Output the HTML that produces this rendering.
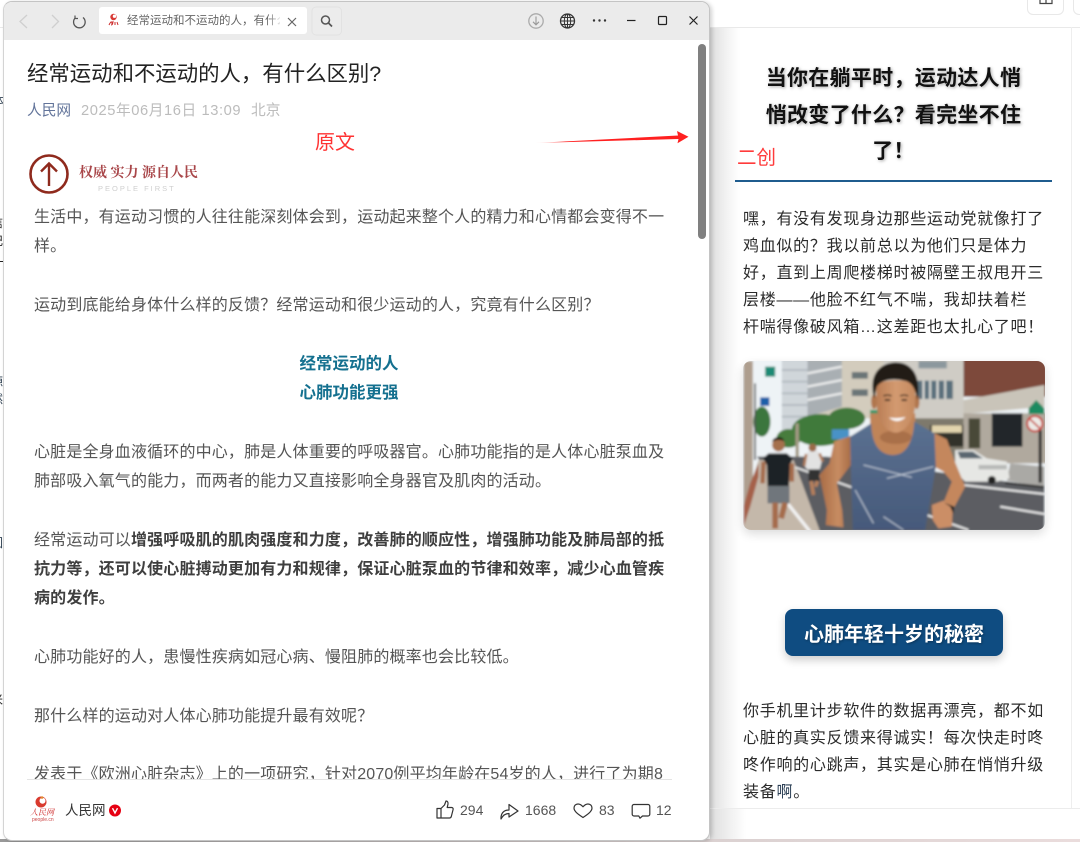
<!DOCTYPE html>
<html lang="zh"><head><meta charset="utf-8"><title>经常运动和不运动的人，有什么区别?</title>
<style>
*{box-sizing:border-box}
html,body{margin:0;padding:0;width:1080px;height:842px;overflow:hidden;background:#fff;font-family:"Liberation Sans","Noto Sans CJK SC",sans-serif}
.a{position:absolute;white-space:nowrap}
.l{position:absolute;left:34px;white-space:nowrap;font-size:16px;line-height:24px;letter-spacing:.16px;color:#555}
.l b{color:#3f3f3f;font-weight:700}
.c{position:absolute;left:3px;width:692px;text-align:center;font-size:16.500px;line-height:24px;font-weight:700;color:#14708f}
.r{position:absolute;left:743px;white-space:nowrap;font-size:16px;line-height:24px;letter-spacing:.72px;color:#2b2b2b}
.t{position:absolute;left:735px;width:317px;text-align:center;font-size:21px;line-height:28px;font-weight:700;color:#111;letter-spacing:.3px;text-shadow:1px 1px 3px rgba(0,0,0,.35)}
</style></head><body>
<div class="a" style="left:710px;top:0;width:370px;height:842px;background:#fff"></div>
<div class="a" style="left:0;top:27px;width:1080px;height:1px;background:#e9e9e9"></div>
<div class="a" style="left:1071px;top:27px;width:1px;height:781px;background:#eee"></div>
<div class="a" style="left:710px;top:808px;width:370px;height:1px;background:#ececec"></div>
<div class="a" style="left:1027px;top:-8px;width:37px;height:23px;background:#fff;border:1px solid #e8e8e8;border-radius:6px"></div>
<div class="a" style="left:1073px;top:-8px;width:30px;height:23px;background:#fff;border:1px solid #e8e8e8;border-radius:6px"></div>
<svg class="a" style="left:1039px;top:0" width="14" height="5"><path d="M1 0V3.500H13V0M7 0V3.500" fill="none" stroke="#444" stroke-width="1.200"/></svg>
<div class="a" style="left:710px;top:28px;width:30px;height:780px;background:linear-gradient(90deg,#dedede,#f4f4f4 60%,#fff)"></div>
<div class="a" style="left:710px;top:809px;width:36px;height:31px;background:linear-gradient(90deg,#dedede,#fff)"></div>
<div class="a" style="left:0;top:839px;width:1080px;height:3px;background:linear-gradient(90deg,#999,#d8cfcf 60%,#eadcdc)"></div>
<div class="a" style="left:-8px;top:92px;font-size:12px;color:#345">体</div>
<div class="a" style="left:-9px;top:214px;font-size:12px;line-height:18px;color:#222;white-space:normal;width:12px">信<br>记</div>
<div class="a" style="left:0;top:261px;width:3px;height:1px;background:#222"></div>
<div class="a" style="left:-9px;top:374px;font-size:12px;line-height:17px;color:#345;white-space:normal;width:12px">源<br>然</div>
<div class="a" style="left:-9px;top:534px;font-size:12px;color:#345">回</div>
<div class="a" style="left:-9px;top:691px;font-size:12px;color:#222">米</div>
<div class="a" style="left:3px;top:1px;width:707px;height:840px;background:#fff;border-radius:9px;border:1px solid #c4c4c4;border-left-color:#d4d4d4;overflow:hidden;box-shadow:2px 1px 4px rgba(0,0,0,.18)"></div>
<div class="a" style="left:4px;top:2px;width:705px;height:38px;background:#ebebeb;border-radius:8px 8px 0 0"></div>
<svg class="a" style="left:0;top:0" width="720" height="40" fill="none">
<path d="M27 15l-7 6.500 7 6.500M52 15l6.500 6.500-6.500 6.500" stroke="#cfcfcf" stroke-width="1.300"/>
<path d="M83 17.500a5.800 5.800 0 1 1-7.500 .2" stroke="#555" stroke-width="1.300"/><path d="M75 15.500v3h3" stroke="#555" stroke-width="1.200"/>
<rect x="312" y="7" width="29.500" height="28" rx="4" fill="#ececec" stroke="#e2e2e2"/>
<circle cx="325.500" cy="20" r="4" stroke="#555" stroke-width="1.500"/><path d="M328.500 23l3.500 3.500" stroke="#555" stroke-width="1.700"/>
<circle cx="536" cy="21" r="7.200" stroke="#ababab" stroke-width="1.300"/><path d="M536 16.500v8M533 21.800l3 3 3-3" stroke="#999" stroke-width="1.100"/>
<circle cx="567.500" cy="21" r="7" stroke="#333" stroke-width="1.300"/><ellipse cx="567.500" cy="21" rx="3.200" ry="7" stroke="#333"/><path d="M560.500 21h14M561.500 17.500h12M561.500 24.500h12M567.500 14v14" stroke="#333"/>
<circle cx="594" cy="20.500" r="1.200" fill="#333"/><circle cx="599.500" cy="20.500" r="1.200" fill="#333"/><circle cx="605" cy="20.500" r="1.200" fill="#333"/>
<path d="M627 20.500h8.500" stroke="#222" stroke-width="1.200"/>
<rect x="658.500" y="16.500" width="8" height="8" rx="1" stroke="#222" stroke-width="1.200"/>
<path d="M689.500 16.500l8 8M697.500 16.500l-8 8" stroke="#222" stroke-width="1.200"/>
</svg>
<div class="a" style="left:99px;top:7px;width:208px;height:27px;background:#fff;border-radius:3px"></div>
<svg class="a" style="left:107px;top:13px" width="14" height="15"><circle cx="6.500" cy="4" r="3.200" fill="#d83a35"/><circle cx="7.500" cy="3.200" r="1.700" fill="#fff"/><path d="M2 12c2-4 3-4 3-1M6 8c0 3-1 4-2 4M8 9v3M10 9l1 3" stroke="#cc2a2a" fill="none"/></svg>
<div class="a" style="left:127px;top:14px;width:153px;overflow:hidden;font-size:11.500px;line-height:15px;color:#666">经常运动和不运动的人，有什么区别?</div>
<div class="a" style="left:268px;top:14px;width:14px;height:15px;background:linear-gradient(90deg,rgba(255,255,255,0),#fff)"></div>
<svg class="a" style="left:287px;top:17px" width="10" height="10"><path d="M1 1l8 8M9 1l-8 8" stroke="#666" stroke-width="1.200"/></svg>
<div class="a" style="left:698px;top:44px;width:8px;height:195px;background:#808080;border-radius:4px"></div>

<div class="a" style="left:27px;top:58px;font-size:21.400px;line-height:32px;color:#222">经常运动和不运动的人，有什么区别?</div>
<div class="a" style="left:27px;top:101px;font-size:14.700px;line-height:20px;color:#62749a">人民网</div>
<div class="a" style="left:81px;top:101px;font-size:14.700px;line-height:20px;color:#bcbcbc;letter-spacing:.58px">2025年06月16日 13:09</div>
<div class="a" style="left:251px;top:101px;font-size:14.700px;line-height:20px;color:#bcbcbc">北京</div>
<div class="a" style="left:315px;top:129px;font-size:20px;line-height:29px;color:#f33">原文</div>
<svg class="a" style="left:530px;top:125px" width="165" height="25"><defs><linearGradient id="g" x1="0" x2="1"><stop offset="0" stop-color="#ff2020" stop-opacity="0"/><stop offset=".2" stop-color="#ff2020"/></linearGradient></defs><path d="M5 18 L148 10.500 L147 6 L158.500 11.700 L147.500 18.300 L148.500 14 Z" fill="url(#g)"/></svg>

<svg class="a" style="left:29px;top:154px" width="42" height="42" fill="none"><circle cx="20" cy="20" r="18.500" stroke="#8f2a1d" stroke-width="2.600"/><path d="M20 32V10M12 17.500l8-8 8 8" stroke="#8f2a1d" stroke-width="2.400"/></svg>
<div class="a" style="left:79px;top:165px;font-family:'Liberation Serif','Noto Serif CJK SC',serif;font-weight:700;font-size:14px;line-height:18px;color:#a9474a">权威 实力 源自人民</div>
<div class="a" style="left:98px;top:184px;font-size:7.500px;line-height:10px;color:#cfcfcf;letter-spacing:2px">PEOPLE FIRST</div>

<div class="l" style="top:206px">生活中，有运动习惯的人往往能深刻体会到，运动起来整个人的精力和心情都会变得不一</div>
<div class="l" style="top:235px">样。</div>
<div class="l" style="top:294px">运动到底能给身体什么样的反馈？经常运动和很少运动的人，究竟有什么区别？</div>
<div class="c" style="top:352px">经常运动的人</div>
<div class="c" style="top:381px">心肺功能更强</div>
<div class="l" style="top:441px">心脏是全身血液循环的中心，肺是人体重要的呼吸器官。心肺功能指的是人体心脏泵血及</div>
<div class="l" style="top:470px">肺部吸入氧气的能力，而两者的能力又直接影响全身器官及肌肉的活动。</div>
<div class="l" style="top:529px">经常运动可以<b>增强呼吸肌的肌肉强度和力度，改善肺的顺应性，增强肺功能及肺局部的抵</b></div>
<div class="l" style="top:558px"><b>抗力等，还可以使心脏搏动更加有力和规律，保证心脏泵血的节律和效率，减少心血管疾</b></div>
<div class="l" style="top:587px"><b>病的发作。</b></div>
<div class="l" style="top:646px">心肺功能好的人，患慢性疾病如冠心病、慢阻肺的概率也会比较低。</div>
<div class="l" style="top:705px">那什么样的运动对人体心肺功能提升最有效呢？</div>
<div class="l" style="top:763px">发表于《欧洲心脏杂志》上的一项研究，针对2070例平均年龄在54岁的人，进行了为期8</div>
<div class="a" style="left:27px;top:779px;width:645px;height:60px;background:#fff;border-top:1px solid #e4e4e4"></div>

<svg class="a" style="left:30px;top:796px" width="24" height="12"><circle cx="11" cy="6" r="5.500" fill="#d93a2e"/><circle cx="12.500" cy="4.800" r="3" fill="#fff"/><circle cx="12" cy="1.500" r="1.300" fill="#e08a2e"/></svg>
<div class="a" style="left:30px;top:807px;font-family:'Liberation Serif','Noto Serif CJK SC',serif;font-style:italic;font-size:8px;line-height:11px;color:#cc2222">人民网</div>
<div class="a" style="left:32px;top:817px;font-size:5px;line-height:6px;color:#c44">people.cn</div>
<div class="a" style="left:65px;top:801px;font-size:13.500px;line-height:19px;color:#333">人民网</div>
<svg class="a" style="left:109px;top:804px" width="13" height="13"><circle cx="6" cy="6.500" r="6" fill="#e60012"/><path d="M3.500 4.200L6 9l2.500-4.800" fill="none" stroke="#fff" stroke-width="1.400"/></svg>

<svg class="a" style="left:430px;top:796px" width="260" height="28" fill="none" stroke="#333" stroke-width="1.200" stroke-linejoin="round">
<path d="M11 12.500v9.500H7V12.500ZM11 12.500l3.500-3.500 1.500-4c1.500 0 2.200 1.200 2 3l-.8 3.500h4.500c1 0 1.700 .9 1.400 2l-1.800 7c-.3 .9-.9 1.500-1.800 1.500H11"/>
<path d="M79 8.500l9 6.500-9 6v-3.500c-3.500 0-6 1.500-8 5.500-.3-5.500 2.500-9 8-9Z"/>
<path d="M153 21.500c-4.500-3-9-6-9-9.500 0-2.400 1.800-4 4-4 1.900 0 3.500 1 5 2.800 1.500-1.800 3.100-2.800 5-2.800 2.200 0 4 1.600 4 4 0 3.500-4.500 6.500-9 9.500Z"/>
<path d="M204 8.500h14c1 0 1.800 .8 1.800 1.800v7.900c0 1-.8 1.800-1.800 1.800h-5.500l-2.500 2.200-1.200-2.200H204c-1 0-1.800-.8-1.800-1.800v-7.900c0-1 .8-1.800 1.800-1.800Z"/>
</svg>
<div class="a" style="left:460px;top:801px;font-size:14px;line-height:19px;color:#555">294</div>
<div class="a" style="left:525px;top:801px;font-size:14px;line-height:19px;color:#555">1668</div>
<div class="a" style="left:599px;top:801px;font-size:14px;line-height:19px;color:#555">83</div>
<div class="a" style="left:656px;top:801px;font-size:14px;line-height:19px;color:#555">12</div>

<div class="t" style="top:65px">当你在躺平时，运动达人悄</div>
<div class="t" style="top:102px">悄改变了什么？看完坐不住</div>
<div class="t" style="top:138px">了！</div>
<div class="a" style="left:737px;top:144px;font-size:19.500px;line-height:28px;color:#ff3b3b">二创</div>
<div class="a" style="left:735px;top:180px;width:317px;height:2px;background:#1f5c8e"></div>

<div class="r" style="top:208px">嘿，有没有发现身边那些运动党就像打了</div>
<div class="r" style="top:235px">鸡血似的？我以前总以为他们只是体力</div>
<div class="r" style="top:262px">好，直到上周爬楼梯时被隔壁王叔甩开三</div>
<div class="r" style="top:289px">层楼——他脸不红气不喘，我却扶着栏</div>
<div class="r" style="top:316px">杆喘得像破风箱…这差距也太扎心了吧！</div>

<div class="a" style="left:743px;top:361px;width:302px;height:169px;border-radius:8px;overflow:hidden;box-shadow:0 4px 10px rgba(0,0,0,.14)">
<svg width="302" height="169" viewBox="40 33 903 507" style="display:block">
<defs><filter id="b" x="-5%" y="-5%" width="110%" height="110%"><feGaussianBlur stdDeviation="3.500"/></filter>
<linearGradient id="sk" x1="0" x2="1"><stop offset="0" stop-color="#b87c54"/><stop offset=".5" stop-color="#d39a70"/><stop offset="1" stop-color="#c48a60"/></linearGradient>
<linearGradient id="ar" x1="0" x2="1"><stop offset="0" stop-color="#a86c46"/><stop offset=".6" stop-color="#c78c62"/><stop offset="1" stop-color="#a86c46"/></linearGradient>
<linearGradient id="tk" x1="0" x2="0" y1="0" y2="1"><stop offset="0" stop-color="#5b7191"/><stop offset="1" stop-color="#46597a"/></linearGradient></defs>
<g filter="url(#b)">
<rect x="30" y="20" width="930" height="530" fill="#eef3f6"/>
<rect x="155" y="25" width="78" height="220" fill="#d0d6da"/>
<path d="M155 60h78M155 95h78M155 130h78M155 165h78M155 200h78" stroke="#aeb7bd" stroke-width="5"/>
<rect x="232" y="25" width="230" height="180" fill="#d3ccbd"/>
<path d="M232 30L335 30V170L232 200Z" fill="#a9afb3"/>
<path d="M232 70L335 50M232 110L335 90M232 150L335 130" stroke="#eceded" stroke-width="7"/>
<rect x="365" y="66" width="48" height="20" fill="#6b7477"/><rect x="365" y="118" width="48" height="20" fill="#6b7477"/>
<rect x="460" y="25" width="240" height="200" fill="#cfccc5"/>
<rect x="565" y="33" width="85" height="22" fill="#8c989e"/>
<rect x="562" y="92" width="106" height="55" fill="#5a6f7b"/>
<path d="M580 92v55M600 92v55M622 92v55M645 92v55" stroke="#dedeD9" stroke-width="6"/>
<rect x="550" y="205" width="160" height="130" fill="#7e796c"/><rect x="600" y="225" width="100" height="65" fill="#33322b"/><rect x="605" y="226" width="90" height="22" fill="#e2d4ad"/>
<rect x="700" y="25" width="250" height="115" fill="#7d4a3b"/>
<path d="M700 150L943 105V170L700 192Z" fill="#c9c4b9"/>
<rect x="700" y="190" width="250" height="150" fill="#b0a99e"/>
<rect x="785" y="190" width="92" height="100" fill="#23282a"/><rect x="715" y="205" width="35" height="90" fill="#4a4a38"/>
<ellipse cx="270" cy="240" rx="85" ry="48" fill="#3f7a3a"/><ellipse cx="350" cy="205" rx="55" ry="32" fill="#43793c"/><ellipse cx="95" cy="215" rx="26" ry="45" fill="#3b763e"/><ellipse cx="175" cy="265" rx="36" ry="28" fill="#467c3e"/>
<rect x="305" y="238" width="52" height="30" fill="#4a92c6"/><rect x="420" y="180" width="26" height="30" fill="#2f9568"/>
<rect x="40" y="33" width="28" height="440" fill="#ae9e8e"/><rect x="105" y="50" width="30" height="30" fill="#1d8a74"/><rect x="90" y="142" width="28" height="26" fill="#1f5ea8"/>
<rect x="196" y="220" width="10" height="100" fill="#a39a84"/><rect x="72" y="100" width="5" height="230" fill="#555"/>
<path d="M80 320H290L943 410V545H250Z" fill="#5c5d62"/>
<path d="M40 470L85 330H190L270 545H40Z" fill="#c4b8aa"/>
<path d="M40 470L60 400L85 340V380L60 470L40 530Z" fill="#a5604a"/>
<path d="M172 460L240 545" stroke="#f2f2f2" stroke-width="10"/>
<path d="M195 352L365 412M590 495L715 540" stroke="#e6e6e6" stroke-width="6"/>
<path d="M810 470L943 492M700 405L943 432" stroke="#ececec" stroke-width="6"/>
<path d="M840 340L943 350V412L830 392Z" fill="#aaa9a5"/><path d="M825 395L943 408V415L825 402Z" fill="#333"/>
<path d="M675 300H730L770 325L830 335L838 385L800 395H705L675 365Z" fill="#e6e7e4"/><path d="M682 305H728L758 325H690Z" fill="#5a6670"/><circle cx="785" cy="390" r="12" fill="#222"/><path d="M745 345H830V358H745Z" fill="#b8bab8"/>
<rect x="925" y="240" width="10" height="158" fill="#333"/><path d="M918 150L943 175V192H895V175Z" fill="#1d8a60"/><circle cx="914" cy="221" r="26" fill="#c8423a"/><circle cx="914" cy="221" r="20" fill="#ecEAe6"/><path d="M899 207L929 235" stroke="#c8423a" stroke-width="5"/>
<path d="M224 350L232 305L262 300L276 330L268 360H234Z" fill="#e2e2e2"/><circle cx="247" cy="293" r="12" fill="#9b6a4a"/><rect x="235" y="358" width="33" height="35" fill="#333"/><path d="M243 393L250 435M262 393L256 410" stroke="#b57f5c" stroke-width="11"/><path d="M228 312L222 348M268 310L278 335" stroke="#b07a58" stroke-width="8"/>
<path d="M98 325L115 310H170L188 325L180 345L176 412H112L110 345Z" fill="#1e2228"/><circle cx="145" cy="285" r="19" fill="#a5704d"/><path d="M126 276c2-18 34-20 36-2c-10-6-24-6-36 2Z" fill="#18140f"/>
<rect x="112" y="408" width="66" height="52" fill="#70767c"/><path d="M135 458L135 535M165 458L153 505" stroke="#a56c4b" stroke-width="17"/>
<path d="M100 335L97 400M185 340L185 395" stroke="#a56c4b" stroke-width="13"/>
<path d="M362 258L312 274L298 340L268 375L290 480L287 525L340 532L336 480L320 400L362 345Z" fill="url(#ar)"/>
<path d="M610 248L650 268L672 330L705 410L672 472L640 458L665 395L640 365L612 350Z" fill="#c4875d"/>
<path d="M420 190H555V320H420Z" fill="#c08459"/>
<ellipse cx="497" cy="262" rx="48" ry="20" fill="#a96f48"/>
<path d="M360 260L423 220C425 270 440 315 490 315C530 315 550 270 552 215L613 250L617 350L585 540H368L364 420Z" fill="url(#tk)"/>
<path d="M400 345L545 382M470 385L610 350M375 420L430 520M460 500L520 540" stroke="#c3ccd9" stroke-width="3" fill="none"/>
<ellipse cx="432" cy="155" rx="9" ry="22" fill="#b0764e"/><ellipse cx="560" cy="155" rx="8" ry="22" fill="#b0764e"/>
<path d="M438 110C438 85 555 85 556 110L554 175C548 215 522 248 497 248C470 248 446 215 440 175Z" fill="url(#sk)"/>
<path d="M432 145C415 85 440 40 495 37C540 36 575 70 562 150C555 115 545 95 520 92C490 85 455 88 440 110C436 125 435 135 432 145Z" fill="#211a16"/>
<path d="M476 203Q502 224 527 201Q503 207 476 203Z" fill="#fff"/>
<path d="M460 138q12-6 24 0M510 138q12-6 24 0" stroke="#2a1d15" stroke-width="4" fill="none"/>
<path d="M464 150h16M514 150h16" stroke="#33241b" stroke-width="5"/>
<path d="M605 465L640 452L668 470L665 530L625 535L608 510Z" fill="#cb8e66"/>
<path d="M642 458L672 470L670 492L660 470Z" fill="#222"/>
</g>
</svg></div>

<div class="a" style="left:785px;top:609px;width:218px;height:47px;background:#0f4c81;border-radius:8px;box-shadow:0 4px 9px rgba(0,0,0,.2);text-align:center;font-size:20px;line-height:52px;font-weight:700;color:#fff;text-shadow:1px 1px 2px rgba(0,0,0,.3);overflow:hidden">心肺年轻十岁的秘密</div>

<div class="r" style="top:700px">你手机里计步软件的数据再漂亮，都不如</div>
<div class="r" style="top:727px">心脏的真实反馈来得诚实！每次快走时咚</div>
<div class="r" style="top:754px">咚作响的心跳声，其实是心肺在悄悄升级</div>
<div class="r" style="top:781px">装备<span style="color:#2b3f55">啊</span>。</div>
</body></html>
